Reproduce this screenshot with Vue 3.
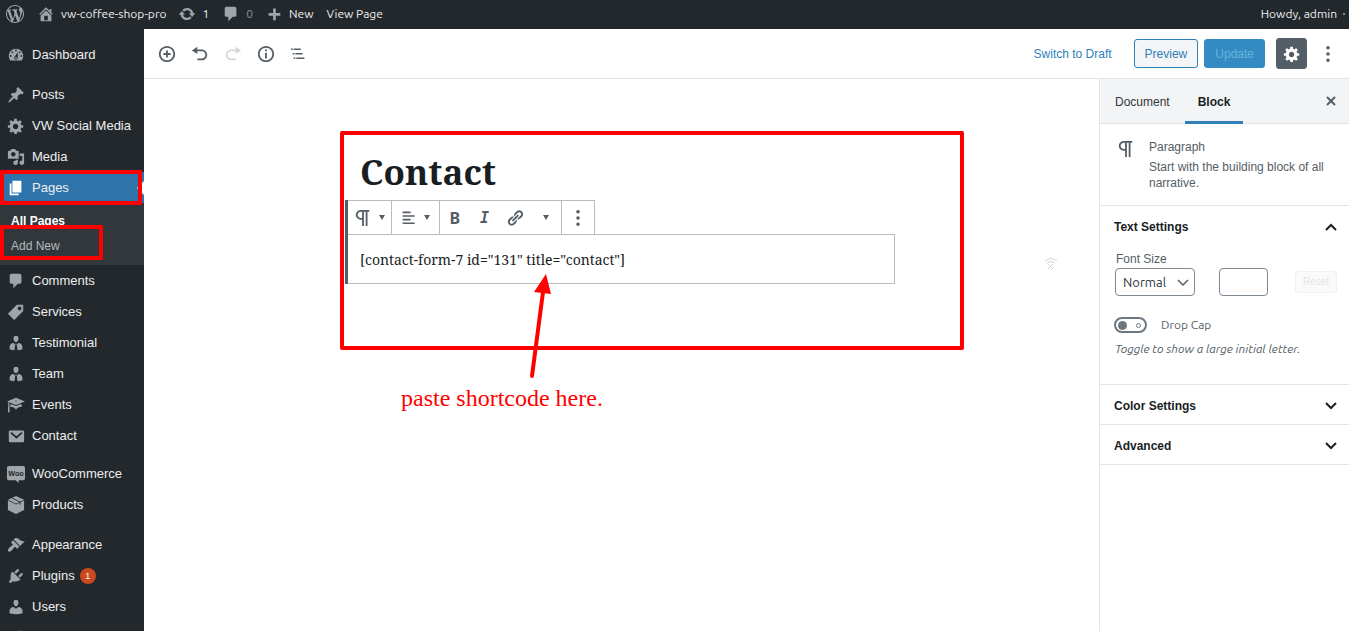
<script setup>
import { ref } from 'vue'

const icons = {
  wordpress: 'M20 10c0-5.51-4.49-10-10-10C4.48 0 0 4.49 0 10c0 5.52 4.48 10 10 10 5.51 0 10-4.48 10-10zM7.78 15.37L4.37 6.22c.55-.02 1.17-.08 1.17-.08.5-.06.44-1.13-.06-1.11 0 0-1.45.11-2.37.11-.18 0-.37 0-.58-.01C4.12 2.69 6.87 1.11 10 1.11c2.33 0 4.45.87 6.05 2.34-.68-.11-1.65.39-1.65 1.58 0 .74.45 1.36.9 2.1.35.61.55 1.36.55 2.46 0 1.49-1.4 5-1.4 5l-3.03-8.37c.54-.02.82-.17.82-.17.5-.05.44-1.25-.06-1.22 0 0-1.44.12-2.38.12-.87 0-2.33-.12-2.33-.12-.5-.03-.56 1.2-.06 1.22l.92.08 1.26 3.41zM17.41 10c.24-.64.74-1.87.43-4.25.7 1.29 1.05 2.71 1.05 4.25 0 3.29-1.73 6.24-4.4 7.78.97-2.59 1.94-5.2 2.92-7.78zM6.1 18.09C3.12 16.65 1.11 13.53 1.11 10c0-1.3.23-2.48.72-3.59C3.25 10.3 4.67 14.2 6.1 18.09zm4.03-6.63l2.58 6.98c-.86.29-1.76.45-2.71.45-.79 0-1.57-.11-2.29-.33.81-2.38 1.62-4.74 2.42-7.1z',
  home: 'M16 8.5l1.53 1.53-1.06 1.06L10 4.6l-6.47 6.49-1.06-1.06L10 2.5l4 4v-2h2v4zm-6-2.46l6 5.99V18H4v-5.97zM12 17v-5H8v5h4z',
  update: 'M10.2 3.28c3.53 0 6.43 2.61 6.92 6h2.08l-3.5 4-3.5-4h2.32c-.45-1.97-2.21-3.45-4.32-3.45-1.45 0-2.73.71-3.54 1.78L4.95 5.66C6.23 4.2 8.11 3.28 10.2 3.28zm-.4 13.44c-3.52 0-6.43-2.61-6.92-6H.8l3.5-4c1.17 1.33 2.33 2.67 3.5 4H5.48c.45 1.97 2.21 3.45 4.32 3.45 1.45 0 2.73-.71 3.54-1.78l1.71 1.95c-1.28 1.46-3.15 2.38-5.25 2.38z',
  comment: 'M5 2h9c1.1 0 2 .9 2 2v7c0 1.1-.9 2-2 2h-2l-5 5v-5H5c-1.1 0-2-.9-2-2V4c0-1.1.9-2 2-2z',
  plus: 'M17 9v3h-5v5H9v-5H4V9h5V4h3v5h5z',
  dashboard: 'M3.76 16h12.48c1.1-1.37 1.76-3.11 1.76-5 0-4.42-3.58-8-8-8s-8 3.58-8 8c0 1.89.66 3.63 1.76 5zM10 4c.55 0 1 .45 1 1s-.45 1-1 1-1-.45-1-1 .45-1 1-1zM6 6c.55 0 1 .45 1 1s-.45 1-1 1-1-.45-1-1 .45-1 1-1zm8 0c.55 0 1 .45 1 1s-.45 1-1 1-1-.45-1-1 .45-1 1-1zm-5.37 5.55L12 7v6c0 1.1-.9 2-2 2s-2-.9-2-2c0-.57.24-1.08.63-1.45zM4 10c.55 0 1 .45 1 1s-.45 1-1 1-1-.45-1-1 .45-1 1-1zm12 0c.55 0 1 .45 1 1s-.45 1-1 1-1-.45-1-1 .45-1 1-1zm-5 3c0-.55-.45-1-1-1s-1 .45-1 1 .45 1 1 1 1-.45 1-1z',
  pin: 'M10.44 3.02l1.82-1.82 6.36 6.35-1.83 1.82c-1.05-.68-2.48-.57-3.41.36l-.75.75c-.92.93-1.04 2.35-.35 3.41l-1.83 1.82-2.41-2.41-2.8 2.79c-.42.42-3.38 2.71-3.8 2.29s1.86-3.39 2.28-3.81l2.79-2.79L4.1 9.36l1.83-1.82c1.05.69 2.48.57 3.4-.36l.75-.75c.93-.92 1.05-2.35.36-3.41z',
  gear: 'M18 12h-2.18c-.17.7-.44 1.35-.81 1.93l1.54 1.54-2.1 2.1-1.54-1.54c-.58.36-1.23.63-1.91.79V19H8v-2.18c-.68-.16-1.33-.43-1.91-.79l-1.54 1.54-2.12-2.12 1.54-1.54c-.36-.58-.63-1.23-.79-1.91H1V9.03h2.17c.16-.7.44-1.35.8-1.94L2.43 5.55l2.1-2.1 1.54 1.54c.58-.37 1.24-.64 1.93-.81V2h3v2.18c.68.16 1.33.43 1.91.79l1.54-1.54 2.12 2.12-1.54 1.54c.36.59.64 1.24.8 1.94H18V12zm-8.5 1.5c1.66 0 3-1.34 3-3s-1.34-3-3-3-3 1.34-3 3 1.34 3 3 3z',
  media: 'M13 11V4c0-.55-.45-1-1-1h-1.67L9 1H5L3.67 3H2c-.55 0-1 .45-1 1v7c0 .55.45 1 1 1h10c.55 0 1-.45 1-1zM7 4.5c1.38 0 2.5 1.12 2.5 2.5S8.38 9.5 7 9.5 4.5 8.38 4.5 7 5.62 4.5 7 4.5zM14 6h5v10.5c0 1.38-1.12 2.5-2.5 2.5S14 17.88 14 16.5s1.12-2.5 2.5-2.5c.17 0 .34.02.5.05V9h-3V6zm-4 8.05V13h2v3.5c0 1.38-1.12 2.5-2.5 2.5S7 17.88 7 16.5 8.12 14 9.5 14c.17 0 .34.02.5.05z',
  pages: 'M6 15V2h10v13H6zm-1 1h8v2H3V5h2v11z',
  tag: 'M11 2h7v7L8 19l-7-7zm3 6c1.1 0 2-.9 2-2s-.9-2-2-2-2 .9-2 2 .9 2 2 2z',
  business: 'M10 8.9C7.8 8.9 7.3 5.8 7.3 5.8 7 4 7.8 2 10 2s3 2 2.7 3.8c0 0-.5 3.1-2.7 3.1zM7.2 10l1.6 1.5.9-.9h.6l.9.9 1.6-1.5c2.5 0 4.3 2.2 4.3 4.5V17s-2.2.8-5.4 1l-.7-5.2.6-1.2H8.4l.6 1.2-.7 5.2c-3.2-.2-5.4-1-5.4-1v-2.5c0-2.3 1.9-4.5 4.3-4.5z',
  cap: 'M10 10L2.54 7.02 3 18H1l.48-11.41L0 6l10-4 10 4zm0-5c-.55 0-1 .22-1 .5s.45.5 1 .5 1-.22 1-.5-.45-.5-1-.5zm0 6l5.57-2.23c.71.94 1.2 2.07 1.36 3.3-.3-.04-.61-.07-.93-.07-2.55 0-4.78 1.37-6 3.41C8.78 13.37 6.55 12 4 12c-.32 0-.63.03-.93.07.16-1.23.65-2.36 1.36-3.3z',
  mail: 'M3.5 4h14c.8 0 1.5.7 1.5 1.5v10c0 .8-.7 1.5-1.5 1.5h-14c-.8 0-1.5-.7-1.5-1.5v-10C2 4.700 2.700 4 3.500 4zM5 5.600L3.800 7l6.700 6 6.700-6L16 5.600l-5.500 4.600z',
  bubble: 'M2 1h16c1.100 0 2 .9 2 2v12c0 1.100-.9 2-2 2h-5v3l-3.500-3H2c-1.100 0-2-.9-2-2V3c0-1.100.9-2 2-2z',
  box: 'M10 0l9 4.200L10 8.700 1 4.200zM1 5l9 4.500L19 5v10.500L10 20l-9-4.500z',
  brush: 'M14.480 11.060L7.410 3.990l1.500-1.500c.5-.56 2.300-.47 3.510.32 1.210.8 1.430 1.280 2.910 2.100 1.180.64 2.450 1.260 4.450.85zm-.71.71L6.700 4.700 4.930 6.470c-.39.39-.39 1.020 0 1.410l1.060 1.060c.39.39.39 1.030 0 1.420-.6.6-1.430 1.110-2.210 1.690-.35.26-.7.53-1.010.84C1.430 14.230.4 16.080 1.400 17.070c.99 1 2.840-.03 4.180-1.360.31-.31.58-.66.85-1.020.57-.78 1.080-1.610 1.690-2.210.39-.39 1.020-.39 1.410 0l1.060 1.060c.39.39 1.020.39 1.410 0z',
  plug: 'M13.110 4.360L9.870 7.600 8 5.730l3.240-3.240c.35-.34 1.050-.2 1.560.32.52.51.66 1.210.31 1.550zm-8 1.770l.91-1.120 9.010 9.010-1.190.84c-.71.71-2.630 1.160-3.820 1.160H6.140L4.900 17.260c-.59.59-1.540.59-2.120 0-.59-.58-.59-1.530 0-2.120l1.240-1.240v-3.880c0-1.130.4-3.190 1.090-3.890zm7.260 3.970l3.240-3.240c.34-.35 1.040-.21 1.550.31.52.51.66 1.210.31 1.550l-3.240 3.250z',
  user: 'M10 9.250c-2.270 0-2.730-3.440-2.730-3.440C7 4.020 7.820 2 9.970 2c2.160 0 2.980 2.020 2.710 3.810 0 0-.41 3.440-2.680 3.440zm0 2.570L12.720 10c2.390 0 4.520 2.330 4.520 4.530v2.490s-3.650 1.130-7.240 1.130c-3.650 0-7.240-1.130-7.240-1.130v-2.490c0-2.250 1.940-4.480 4.470-4.480z',
  wrench: 'M16.700 9.300c-1.300 1.300-3.100 1.700-4.800 1.200l-6.700 6.700c-.6.6-1.700.6-2.300 0-.6-.6-.6-1.600 0-2.300l6.700-6.700C9 6.500 9.500 4.600 10.800 3.300 12 2.100 13.700 1.700 15.200 2l-2.700 2.700.6 2.200 2.200.6L18 4.800c.3 1.500-.1 3.300-1.300 4.500z',
  insert: 'M10 1c-5 0-9 4-9 9s4 9 9 9 9-4 9-9-4-9-9-9zm0 16c-3.900 0-7-3.100-7-7s3.100-7 7-7 7 3.100 7 7-3.100 7-7 7zm1-11H9v3H6v2h3v3h2v-3h3V9h-3V6z',
  undo: 'M12 5H7V2L1 6l6 4V7h5c2.200 0 4 1.800 4 4s-1.800 4-4 4H7v2h5c3.300 0 6-2.700 6-6s-2.700-6-6-6z',
  redo: 'M8 5h5V2l6 4-6 4V7H8c-2.200 0-4 1.800-4 4s1.800 4 4 4h5v2H8c-3.300 0-6-2.700-6-6s2.700-6 6-6z',
  info: 'M10 1c-5 0-9 4-9 9s4 9 9 9 9-4 9-9-4-9-9-9zm0 16c-3.900 0-7-3.100-7-7s3.100-7 7-7 7 3.100 7 7-3.100 7-7 7zM9 5h2v2H9zM9 8.500h2V15H9z',
  outline: 'M1 4h2v1.500H1zM4 4h8v1.500H4zM3 9h2v1.500H3zM6 9h8v1.500H6zM4 14h2v1.500H4zM7 14h9v1.500H7z',
  link: 'M17.740 2.760c1.680 1.690 1.680 4.410 0 6.100l-1.530 1.520c-1.120 1.120-2.700 1.470-4.140 1.090l2.620-2.610.76-.77.76-.76c.84-.84.84-2.200 0-3.040-.84-.85-2.200-.85-3.040 0l-.77.76-3.380 3.380c-.37-1.440-.02-3.020 1.100-4.140l1.520-1.530c1.690-1.680 4.420-1.680 6.100 0zM8.590 13.430l5.340-5.340c.42-.42.42-1.100 0-1.520-.44-.43-1.130-.39-1.530 0l-5.330 5.340c-.42.42-.42 1.100 0 1.520.44.43 1.130.39 1.520 0zm-.76 2.290l4.140-4.150c.38 1.440.03 3.020-1.090 4.140l-1.520 1.530c-1.690 1.680-4.410 1.680-6.100 0-1.680-1.680-1.680-4.420 0-6.100l1.530-1.520c1.120-1.120 2.700-1.470 4.140-1.100l-4.140 4.150c-.85.84-.85 2.200 0 3.050.84.84 2.200.84 3.040 0z',
  left: 'M2 2h10v2H2zM2 6.500h15v2H2zM2 11h10v2H2zM2 15.500h15v2H2z',
  dots: 'M10 1a2 2 0 1 1 0 4 2 2 0 0 1 0-4zm0 7a2 2 0 1 1 0 4 2 2 0 0 1 0-4zm0 7a2 2 0 1 1 0 4 2 2 0 0 1 0-4z',
}

const pilcrow = 'M11 5v7H9.500C7.600 12 6 10.400 6 8.500S7.600 5 9.500 5H11m8-2H9.500C6.500 3 4 5.500 4 8.500S6.500 14 9.500 14H11v7h2V5h2v16h2V5h2V3z'

const menuGroups = [
  { id: 'home', items: [{ label: 'Dashboard', icon: 'dashboard' }] },
  {
    id: 'content',
    items: [
      { label: 'Posts', icon: 'pin' },
      { label: 'VW Social Media', icon: 'gear' },
      { label: 'Media', icon: 'media' },
      { label: 'Pages', icon: 'pages', active: true },
    ],
  },
  {
    id: 'types',
    items: [
      { label: 'Comments', icon: 'comment' },
      { label: 'Services', icon: 'tag' },
      { label: 'Testimonial', icon: 'business' },
      { label: 'Team', icon: 'business' },
      { label: 'Events', icon: 'cap' },
      { label: 'Contact', icon: 'mail' },
    ],
  },
  {
    id: 'shop',
    items: [
      { label: 'WooCommerce', icon: 'bubble', woo: true },
      { label: 'Products', icon: 'box' },
    ],
  },
  {
    id: 'site',
    items: [
      { label: 'Appearance', icon: 'brush' },
      { label: 'Plugins', icon: 'plug', count: 1 },
      { label: 'Users', icon: 'user' },
    ],
  },
]

const tools = [
  { label: 'Add block', icon: 'insert' },
  { label: 'Undo', icon: 'undo' },
  { label: 'Redo', icon: 'redo', disabled: true },
  { label: 'Content structure', icon: 'info' },
  { label: 'Block navigation', icon: 'outline' },
]

const fontSize = ref('Normal')
const customSize = ref('')
const dropCap = ref(false)
</script>

<template>
  <div class="app">
    <header class="adminbar">
      <a href="#" class="bar-logo" aria-label="WordPress"><svg class="icon" viewBox="0 0 20 20"><path :d="icons.wordpress" /></svg></a>
      <a href="#" class="bar-site"><svg class="icon" viewBox="0 0 20 20"><path fill-rule="evenodd" :d="icons.home" /></svg>vw-coffee-shop-pro</a>
      <a href="#" class="bar-updates"><svg class="icon" viewBox="0 0 20 20"><path :d="icons.update" /></svg>1</a>
      <a href="#" class="bar-comments"><svg class="icon" viewBox="0 0 20 20"><path :d="icons.comment" /></svg><span class="dim">0</span></a>
      <a href="#" class="bar-new"><svg class="icon" viewBox="0 0 20 20"><path :d="icons.plus" /></svg>New</a>
      <a href="#" class="bar-view">View Page</a>
      <a href="#" class="bar-user">Howdy, admin<span class="avatar"></span></a>
    </header>

    <nav class="menu" aria-label="Main menu">
      <ul v-for="group in menuGroups" :key="group.id" :class="['menu-group', group.id]">
        <li v-for="item in group.items" :key="item.label">
          <a href="#" :class="['menu-item', { active: item.active }]">
            <svg class="icon" viewBox="0 0 20 20">
              <path fill-rule="evenodd" :d="icons[item.icon]" />
              <text v-if="item.woo" class="woo" x="10" y="12" text-anchor="middle">Woo</text>
              <path v-if="item.icon === 'box'" class="tape" d="M5.500 2.200l9 4.400v3" />
            </svg>
            <span>{{ item.label }}</span>
            <span v-if="item.count" class="count">{{ item.count }}</span>
            <span v-if="item.active" class="highlight"></span>
          </a>
          <ul v-if="item.active" class="submenu">
            <li><a href="#" class="current">All Pages</a></li>
            <li><a href="#">Add New<span class="highlight"></span></a></li>
          </ul>
        </li>
        <li v-if="group.id === 'site'">
          <a href="#" class="menu-item" aria-label="Tools"><svg class="icon" viewBox="0 0 20 20"><path :d="icons.wrench" /></svg></a>
        </li>
      </ul>
    </nav>

    <div class="topbar">
      <div class="tools">
        <button v-for="tool in tools" :key="tool.label" type="button" class="plain" :aria-label="tool.label" :disabled="tool.disabled">
          <svg class="icon" viewBox="0 0 20 20"><path fill-rule="evenodd" :d="icons[tool.icon]" /></svg>
        </button>
      </div>
      <button type="button" class="plain draft">Switch to Draft</button>
      <button type="button" class="btn preview">Preview</button>
      <button type="button" class="btn update">Update</button>
      <button type="button" class="btn settings" aria-label="Settings"><svg class="icon" viewBox="0 0 20 20"><path fill-rule="evenodd" :d="icons.gear" /></svg></button>
      <button type="button" class="plain" aria-label="More"><svg class="icon" viewBox="0 0 20 20"><path :d="icons.dots" /></svg></button>
    </div>

    <main class="canvas">
      <div class="column">
        <h1>Contact</h1>
        <section class="block">
          <div class="toolbar">
            <div class="tool-group">
              <button type="button" class="plain" aria-label="Block type"><svg class="icon" viewBox="2 2 20 20"><path :d="pilcrow" /></svg><span class="caret"></span></button>
            </div>
            <div class="tool-group">
              <button type="button" class="plain" aria-label="Alignment"><svg class="icon small" viewBox="0 0 20 20"><path :d="icons.left" /></svg><span class="caret"></span></button>
            </div>
            <div class="tool-group format">
              <button type="button" class="plain bold" aria-label="Bold">B</button>
              <button type="button" class="plain italic" aria-label="Italic">I</button>
              <button type="button" class="plain" aria-label="Link"><svg class="icon" viewBox="0 0 20 20"><path :d="icons.link" /></svg></button>
              <button type="button" class="plain" aria-label="More formatting"><span class="caret"></span></button>
            </div>
            <div class="tool-group last">
              <button type="button" class="plain" aria-label="Block options"><svg class="icon" viewBox="0 0 20 20"><path :d="icons.dots" /></svg></button>
            </div>
          </div>
          <p class="shortcode">[contact-form-7 id="131" title="contact"]</p>
        </section>
        <div class="frame"></div>
        <svg class="arrow" viewBox="0 0 24 106"><path class="shaft" d="M5 102L16 18" /><path d="M19 0L7 18 24 20z" /></svg>
        <p class="note">paste shortcode here.</p>
      </div>
      <svg class="signal" viewBox="0 0 14 14"><path d="M1 4Q7-1 13 4M3 6Q7 3 11 6M4 7l5 5M9 7l-5 5" /></svg>
    </main>

    <aside class="panel">
      <div class="tabs">
        <button type="button" class="tab">Document</button>
        <button type="button" class="tab on">Block</button>
        <button type="button" class="plain close" aria-label="Close settings"><svg viewBox="0 0 10 10"><path d="M1 1l8 8M9 1L1 9" /></svg></button>
      </div>
      <div class="card">
        <svg class="icon" viewBox="2 2 20 20"><path :d="pilcrow" /></svg>
        <div>
          <h2>Paragraph</h2>
          <p>Start with the building block of all narrative.</p>
        </div>
      </div>
      <section class="text-settings">
        <button type="button" class="section-title">Text Settings<svg class="chevron" viewBox="0 0 12 8"><path d="M1 7l5-5 5 5" /></svg></button>
        <label class="size-label" for="size">Font Size</label>
        <div class="sizes">
          <div class="select">
            <select id="size" v-model="fontSize"><option>Normal</option><option>Large</option></select>
            <svg class="chevron" viewBox="0 0 12 8"><path d="M1 1l5 5 5-5" /></svg>
          </div>
          <input v-model="customSize" class="custom" type="text" aria-label="Custom size" />
          <button type="button" class="reset" disabled>Reset</button>
        </div>
        <label class="toggle"><input v-model="dropCap" type="checkbox" />Drop Cap</label>
        <p class="help">Toggle to show a large initial letter.</p>
      </section>
      <section v-for="title in ['Color Settings', 'Advanced']" :key="title">
        <button type="button" class="section-title">{{ title }}<svg class="chevron" viewBox="0 0 12 8"><path d="M1 1l5 5 5-5" /></svg></button>
      </section>
    </aside>
  </div>
</template>

<style>
body {
  margin: 0;
}
</style>

<style scoped>
.app {
  display: grid;
  grid-template: 29px 50px 1fr / 144px 1fr 250px;
  grid-template-areas: 'bar bar bar' 'menu top top' 'menu canvas panel';
  height: 100vh;
  overflow: hidden;
  background: #fff;
  color: #191e23;
  font: 12px/16px 'Liberation Sans', Arial, sans-serif;
}
*,
*::before,
*::after {
  box-sizing: border-box;
}
ul {
  margin: 0;
  padding: 0;
  list-style: none;
}
h1,
h2,
p {
  margin: 0;
}
a {
  color: inherit;
  text-decoration: none;
}
button {
  font: inherit;
  cursor: pointer;
}
.icon {
  width: 18px;
  height: 18px;
  flex: none;
  fill: currentColor;
}
.icon.small {
  width: 16px;
  height: 16px;
}
.plain {
  display: flex;
  align-items: center;
  justify-content: center;
  padding: 0;
  border: 0;
  background: none;
  color: #555d66;
}

/* Admin bar */
.adminbar {
  grid-area: bar;
  display: flex;
  align-items: center;
  padding: 0 4px 2px 6px;
  background: #23282d;
  color: #eee;
  font-family: Ubuntu, 'Open Sans', sans-serif;
}
.adminbar a {
  display: flex;
  align-items: center;
  gap: 6px;
}
.adminbar .icon {
  color: #a0a5aa;
}
.bar-site {
  margin-left: 13px;
}
.bar-updates {
  margin-left: 12px;
}
.bar-comments {
  margin-left: 13px;
}
.bar-new {
  margin-left: 12px;
}
.bar-view {
  margin-left: 13px;
}
.adminbar .bar-user {
  margin-left: auto;
}
.dim {
  color: #8b9095;
}
.avatar {
  width: 2px;
  height: 2px;
  background: #82878c;
}

/* Side menu */
.menu {
  grid-area: menu;
  min-height: 0;
  padding-top: 10px;
  overflow: hidden;
  background: #23282d;
  color: #eee;
  font-size: 13px;
}
.menu-group.content,
.menu-group.site {
  margin-top: 9px;
}
.menu-group.shop {
  margin-top: 7px;
}
.menu-item {
  position: relative;
  display: flex;
  align-items: center;
  gap: 7px;
  height: 31px;
  padding-left: 7px;
}
.menu-item .icon {
  color: #a0a5aa;
}
.menu-item.active {
  background: #2e74aa;
}
.menu-item.active .icon {
  color: #fff;
}
.menu-item.active::after {
  content: '';
  position: absolute;
  right: 0;
  border: 7px solid transparent;
  border-left: 0;
  border-right-color: #fff;
}
.woo {
  fill: #23282d;
  font: bold 8px 'Liberation Sans', sans-serif;
}
.tape {
  fill: none;
  stroke: #23282d;
}
.count {
  width: 16px;
  margin-left: -2px;
  border-radius: 8px;
  background: #ca4a1f;
  color: #fff;
  font-size: 9px;
  line-height: 16px;
  text-align: center;
}
.submenu {
  padding: 6px 0;
  background: #32373c;
  color: #b4b9be;
  font-size: 12px;
}
.submenu a {
  position: relative;
  display: block;
  padding: 4px 0 5px 11px;
}
.submenu .current {
  color: #fff;
  font-weight: bold;
}
.highlight {
  position: absolute;
  z-index: 1;
  inset: -2px 2px -2px 0;
  border: 4px solid #f00;
  border-radius: 1px;
}
.submenu .highlight {
  inset: -9px 41px -1px 0;
}

/* Editor header */
.topbar {
  grid-area: top;
  display: flex;
  align-items: center;
  padding: 0 12px 0 14px;
  border-bottom: 1px solid #e2e4e7;
}
.tools {
  display: flex;
  gap: 15px;
  margin-right: auto;
}
.plain:disabled {
  color: #d5d8db;
}
.draft {
  margin-right: 22px;
  color: #2e7fba;
}
.btn {
  display: flex;
  align-items: center;
  justify-content: center;
  height: 29px;
  padding: 0 10px;
  border: 1px solid #2e7fba;
  border-radius: 3px;
}
.preview {
  background: #f3f5f6;
  color: #2e7fba;
}
.update {
  margin: 0 11px 0 6px;
  background: #348ac2;
  border-color: #348ac2;
  color: #66b4dd;
}
.settings {
  width: 31px;
  height: 31px;
  margin-right: 12px;
  padding: 0;
  border-color: #555d66;
  background: #555d66;
  color: #fff;
}

/* Canvas */
.canvas {
  grid-area: canvas;
  position: relative;
  padding: 64px 3px 0 0;
}
.column {
  position: relative;
  max-width: 550px;
  margin: 0 auto;
}
h1 {
  padding: 5px 15px 4px;
  font: bold 35px/48px 'Noto Serif', 'DejaVu Serif Condensed', 'DejaVu Serif', serif;
}
.block {
  border-left: 3px solid #555d66;
}
.toolbar {
  display: flex;
  width: max-content;
  border: 1px solid #b5bcc2;
  border-left: 0;
}
.tool-group {
  display: flex;
  justify-content: center;
  width: 48px;
  border-right: 1px solid #b5bcc2;
}
.tool-group:first-child {
  width: 44px;
}
.tool-group.format {
  justify-content: space-around;
  width: 122px;
}
.tool-group.last {
  width: 32px;
  border: 0;
}
.tool-group .plain {
  gap: 7px;
  min-width: 16px;
  height: 33px;
}
.tool-group .bold {
  font: bold 16px 'Noto Sans', sans-serif;
}
.tool-group .italic {
  font: italic bold 15px 'DejaVu Sans Mono', monospace;
}
.caret {
  border: 3px solid transparent;
  border-top: 5px solid #555d66;
  border-bottom: 0;
}
.shortcode {
  margin-top: -1px;
  padding: 13px 12px 11px;
  border: 1px solid #b5bcc2;
  border-left: 0;
  color: #191e23;
  font: 14px/24px 'Noto Serif', 'DejaVu Serif Condensed', 'DejaVu Serif', serif;
}
.frame {
  position: absolute;
  top: -12px;
  left: -5px;
  width: 624px;
  height: 219px;
  border: 4px solid #f00;
  border-radius: 2px;
}
.arrow {
  position: absolute;
  top: 131px;
  left: 182px;
  width: 24px;
  height: 106px;
  fill: #f00;
}
.shaft {
  stroke: #f00;
  stroke-width: 4;
  stroke-linecap: round;
}
.note {
  padding: 100px 0 0 56px;
  color: #f00;
  font: 24px/28px 'Liberation Serif', serif;
}
.signal {
  position: absolute;
  top: 178px;
  right: 41px;
  width: 14px;
  height: 14px;
  fill: none;
  stroke: #d5d5d5;
}

/* Settings panel */
.panel {
  grid-area: panel;
  border-left: 1px solid #e2e4e7;
}
.tabs {
  display: flex;
  height: 45px;
  border-bottom: 1px solid #e2e4e7;
  background: #f3f4f5;
}
.tab {
  height: 45px;
  padding: 3px 15px 0;
  border: 0;
  border-bottom: 3px solid transparent;
  background: none;
  color: #32373c;
}
.tab.on {
  padding: 3px 13px 0;
  border-color: #2e7fba;
  color: #191e23;
  font-weight: bold;
}
.close {
  margin: 0 13px 0 auto;
}
.close svg {
  width: 10px;
  height: 10px;
  fill: none;
  stroke: #555d66;
  stroke-width: 2;
}
.card {
  display: flex;
  gap: 14px;
  padding: 15px 14px 14px 17px;
  color: #555d66;
}
h2 {
  margin-bottom: 4px;
  font: inherit;
}
.card .icon {
  margin-top: 1px;
}
.section-title {
  display: flex;
  align-items: center;
  justify-content: space-between;
  width: 100%;
  height: 39px;
  padding: 2px 12px 0 14px;
  border: 0;
  background: none;
  color: #191e23;
  font-weight: bold;
}
.chevron {
  width: 12px;
  height: 8px;
  fill: none;
  stroke: currentColor;
  stroke-width: 2;
}
section {
  color: #555d66;
}
.panel section {
  border-top: 1px solid #e2e4e7;
}
.panel section:last-child {
  border-bottom: 1px solid #e2e4e7;
}
.text-settings {
  padding-bottom: 27px;
}
.size-label {
  display: block;
  padding: 6px 16px 1px;
}
.sizes {
  display: flex;
  align-items: center;
  padding: 0 12px 0 15px;
}
.select {
  position: relative;
  width: 80px;
}
.select select {
  width: 100%;
  height: 28px;
  padding: 0 7px;
  appearance: none;
  border: 1px solid #7e8993;
  border-radius: 4px;
  background: #fff;
  color: #32373c;
  font: 13px Ubuntu, 'Open Sans', sans-serif;
}
.select .chevron {
  position: absolute;
  top: 11px;
  right: 6px;
  stroke-width: 1.5;
  pointer-events: none;
}
.custom {
  width: 49px;
  height: 28px;
  margin-left: 24px;
  border: 1px solid #7e8993;
  border-radius: 4px;
}
.reset {
  height: 22px;
  margin-left: auto;
  padding: 0 7px;
  border: 1px solid #f0f1f2;
  border-radius: 3px;
  background: #fafafa;
  color: #e3e5e7;
  font-size: 10px;
}
.toggle {
  display: flex;
  align-items: center;
  gap: 14px;
  padding: 21px 14px 0;
  font-family: Ubuntu, 'Open Sans', sans-serif;
}
.toggle input {
  display: flex;
  align-items: center;
  justify-content: space-between;
  width: 33px;
  height: 16px;
  margin: 0;
  padding: 0 4px 0 2px;
  appearance: none;
  border: 2px solid #6c7781;
  border-radius: 8px;
}
.toggle input::before {
  content: '';
  width: 9px;
  height: 9px;
  border-radius: 50%;
  background: #6c7781;
}
.toggle input::after {
  content: '';
  width: 5px;
  height: 5px;
  border: 1px solid #6c7781;
  border-radius: 50%;
}
.help {
  padding: 8px 15px 0;
  font: italic 12px/16px Ubuntu, 'Open Sans', sans-serif;
}
</style>
